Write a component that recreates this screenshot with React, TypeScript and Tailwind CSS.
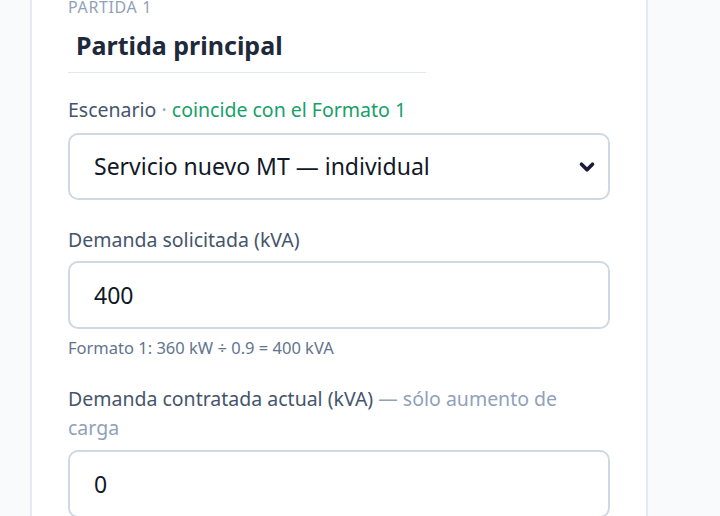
import React, { useState } from 'react';
import { ChevronDown } from 'lucide-react';

const App: React.FC = () => {
  const [title, setTitle] = useState('Partida principal');
  const [scenario, setScenario] = useState('nuevo-mt');
  const [demand, setDemand] = useState('400');
  const [current, setCurrent] = useState('0');

  return (
    <div className="min-h-screen bg-[#f8fafc] overflow-hidden" style={{ fontFamily: '"Segoe UI", "Noto Sans", sans-serif' }}>
      <div className="ml-[30px] w-[618px] -mt-[3px] bg-white border-x-2 border-[#e5e9f0] px-[36px] pb-10">
        {/* Partida header */}
        <div className="text-[16px] leading-[20px] uppercase tracking-[0.04em] text-slate-400">Partida 1</div>
        <input
          value={title}
          onChange={(e) => setTitle(e.target.value)}
          className="w-[358px] h-[56px] px-[8px] border-b border-[#e2e8f0] text-[25px] font-bold text-[#1e293b] outline-none"
        />

        {/* Escenario */}
        <div className="mt-[22px] text-[19.5px] leading-[29px] text-slate-600">
          Escenario <span className="text-slate-400">·</span>{' '}
          <span className="text-[#16a06a]">coincide con el Formato 1</span>
        </div>
        <div className="relative mt-[9px]">
          <select
            value={scenario}
            onChange={(e) => setScenario(e.target.value)}
            className="appearance-none w-full h-[67px] pl-[24px] pr-12 rounded-[10px] border-2 border-[#cfd8e3] bg-white text-[23px] text-[#111827] outline-none"
          >
            <option value="nuevo-mt">Servicio nuevo MT — individual</option>
            <option value="aumento">Aumento de carga MT</option>
          </select>
          <ChevronDown className="absolute right-[12px] top-1/2 -translate-y-1/2 w-[22px] h-[22px] text-[#1e1b3a] pointer-events-none" strokeWidth={4} />
        </div>

        {/* Demanda solicitada */}
        <label className="block mt-[25px] text-[19.5px] leading-[29px] text-slate-600">Demanda solicitada (kVA)</label>
        <input
          value={demand}
          onChange={(e) => setDemand(e.target.value)}
          className="mt-[7px] w-full h-[68px] px-[24px] rounded-[10px] border-2 border-[#cfd8e3] bg-white text-[23px] text-[#111827] outline-none"
        />
        <p className="mt-[8px] text-[16.5px] leading-[22px] text-slate-500">Formato 1: 360 kW ÷ 0.9 = 400 kVA</p>

        {/* Demanda contratada */}
        <label className="block mt-[25px] text-[19.5px] leading-[29px] text-slate-600">
          Demanda contratada actual (kVA) <span className="text-slate-400">— sólo aumento de carga</span>
        </label>
        <input
          value={current}
          onChange={(e) => setCurrent(e.target.value)}
          className="mt-[8px] w-full h-[68px] px-[24px] rounded-[10px] border-2 border-[#cfd8e3] bg-white text-[23px] text-[#111827] outline-none"
        />
      </div>
    </div>
  );
};

export default App;
